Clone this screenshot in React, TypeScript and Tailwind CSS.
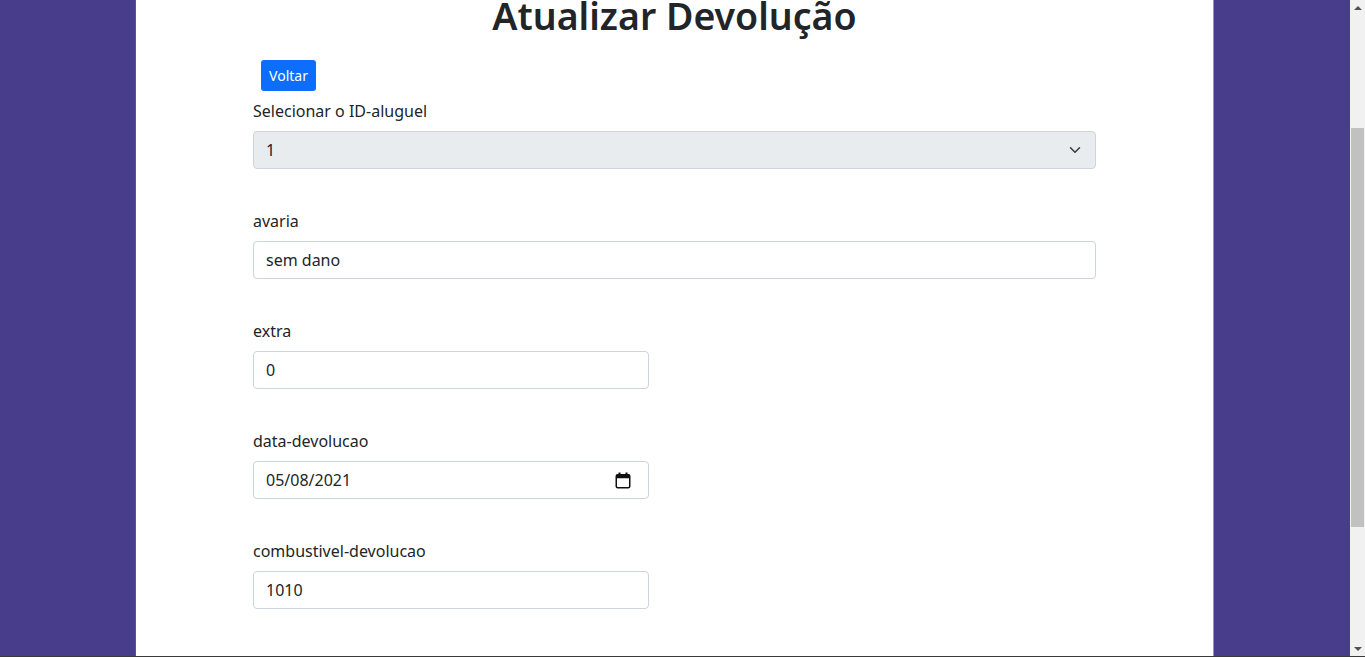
import React from "react";

const FONT = "font-['Segoe_UI','Noto_Sans',sans-serif]";

function Field({ label, children }: { label: string; children: React.ReactNode }) {
  return (
    <div className="mb-10">
      <label className="block text-[16px] leading-6 mb-2 text-[#212529]">{label}</label>
      {children}
    </div>
  );
}

function TextBox({ value, narrow }: { value: string; narrow?: boolean }) {
  return (
    <div
      className={`${narrow ? "w-[396px]" : "w-full"} h-[38px] flex items-center px-3 bg-white border border-[#ced4da] rounded text-[16px] text-[#212529]`}
    >
      {value}
    </div>
  );
}

function CalendarIcon() {
  return (
    <svg width="16" height="17" viewBox="0 0 16 17" fill="none">
      <rect x="3.5" y="0.5" width="2" height="3" fill="#111" />
      <rect x="10.5" y="0.5" width="2" height="3" fill="#111" />
      <rect x="1.25" y="2.75" width="13.5" height="13" rx="1.5" stroke="#111" strokeWidth="1.5" />
      <rect x="1.25" y="2.75" width="13.5" height="3.5" fill="#111" />
    </svg>
  );
}

export default function App() {
  return (
    <div className={`${FONT} h-[657px] w-full flex flex-col overflow-hidden`}>
      <div className="flex flex-1 min-h-0">
        {/* Page */}
        <div className="flex-1 bg-[#483d8b] flex pl-[135px]">
          <div className="w-[1079px] bg-white border-l border-[#5b5290] border-r border-r-[#9a9a9a]">
            <div className="w-[843px] mx-auto">
              <h1 className="text-center text-[37.5px] leading-[48px] font-semibold text-[#212529] -mt-[8px] mb-[20px]">
                Atualizar Devolução
              </h1>

              <button className="ml-2 mb-2 h-[31px] w-[55px] flex items-center justify-center rounded-[3px] bg-[#0d6efd] text-white text-[14px] leading-[21px]">
                Voltar
              </button>

              <Field label="Selecionar o ID-aluguel">
                <div className="w-full h-[38px] flex items-center justify-between pl-3 pr-3 bg-[#e9ecef] border border-[#ced4da] rounded text-[16px] text-[#212529]">
                  <span>1</span>
                  <svg width="16" height="12" viewBox="0 0 16 16" fill="none">
                    <path d="m2 5 6 6 6-6" stroke="#343a40" strokeWidth="2" strokeLinecap="round" strokeLinejoin="round" />
                  </svg>
                </div>
              </Field>

              <Field label="avaria">
                <TextBox value="sem dano" />
              </Field>

              <Field label="extra">
                <TextBox value="0" narrow />
              </Field>

              <Field label="data-devolucao">
                <div className="w-[396px] h-[38px] flex items-center justify-between pl-3 pr-[17px] bg-white border border-[#ced4da] rounded text-[16px] text-[#212529]">
                  <span>05/08/2021</span>
                  <CalendarIcon />
                </div>
              </Field>

              <Field label="combustivel-devolucao">
                <TextBox value="1010" narrow />
              </Field>
            </div>
          </div>
        </div>

        {/* Scrollbar */}
        <div className="w-[15px] bg-[#f1f1f1] flex flex-col items-center">
          <div className="h-[15px] flex items-center justify-center">
            <div className="w-0 h-0 border-l-[4px] border-r-[4px] border-b-[4px] border-l-transparent border-r-transparent border-b-[#505050]" />
          </div>
          <div className="mt-[113px] w-[13px] h-[399px] bg-[#c1c1c1]" />
          <div className="flex-1" />
          <div className="h-[15px] flex items-center justify-center">
            <div className="w-0 h-0 border-l-[4px] border-r-[4px] border-t-[4px] border-l-transparent border-r-transparent border-t-[#505050]" />
          </div>
        </div>
      </div>
      <div className="h-px bg-[#3a3a3a]" />
    </div>
  );
}
